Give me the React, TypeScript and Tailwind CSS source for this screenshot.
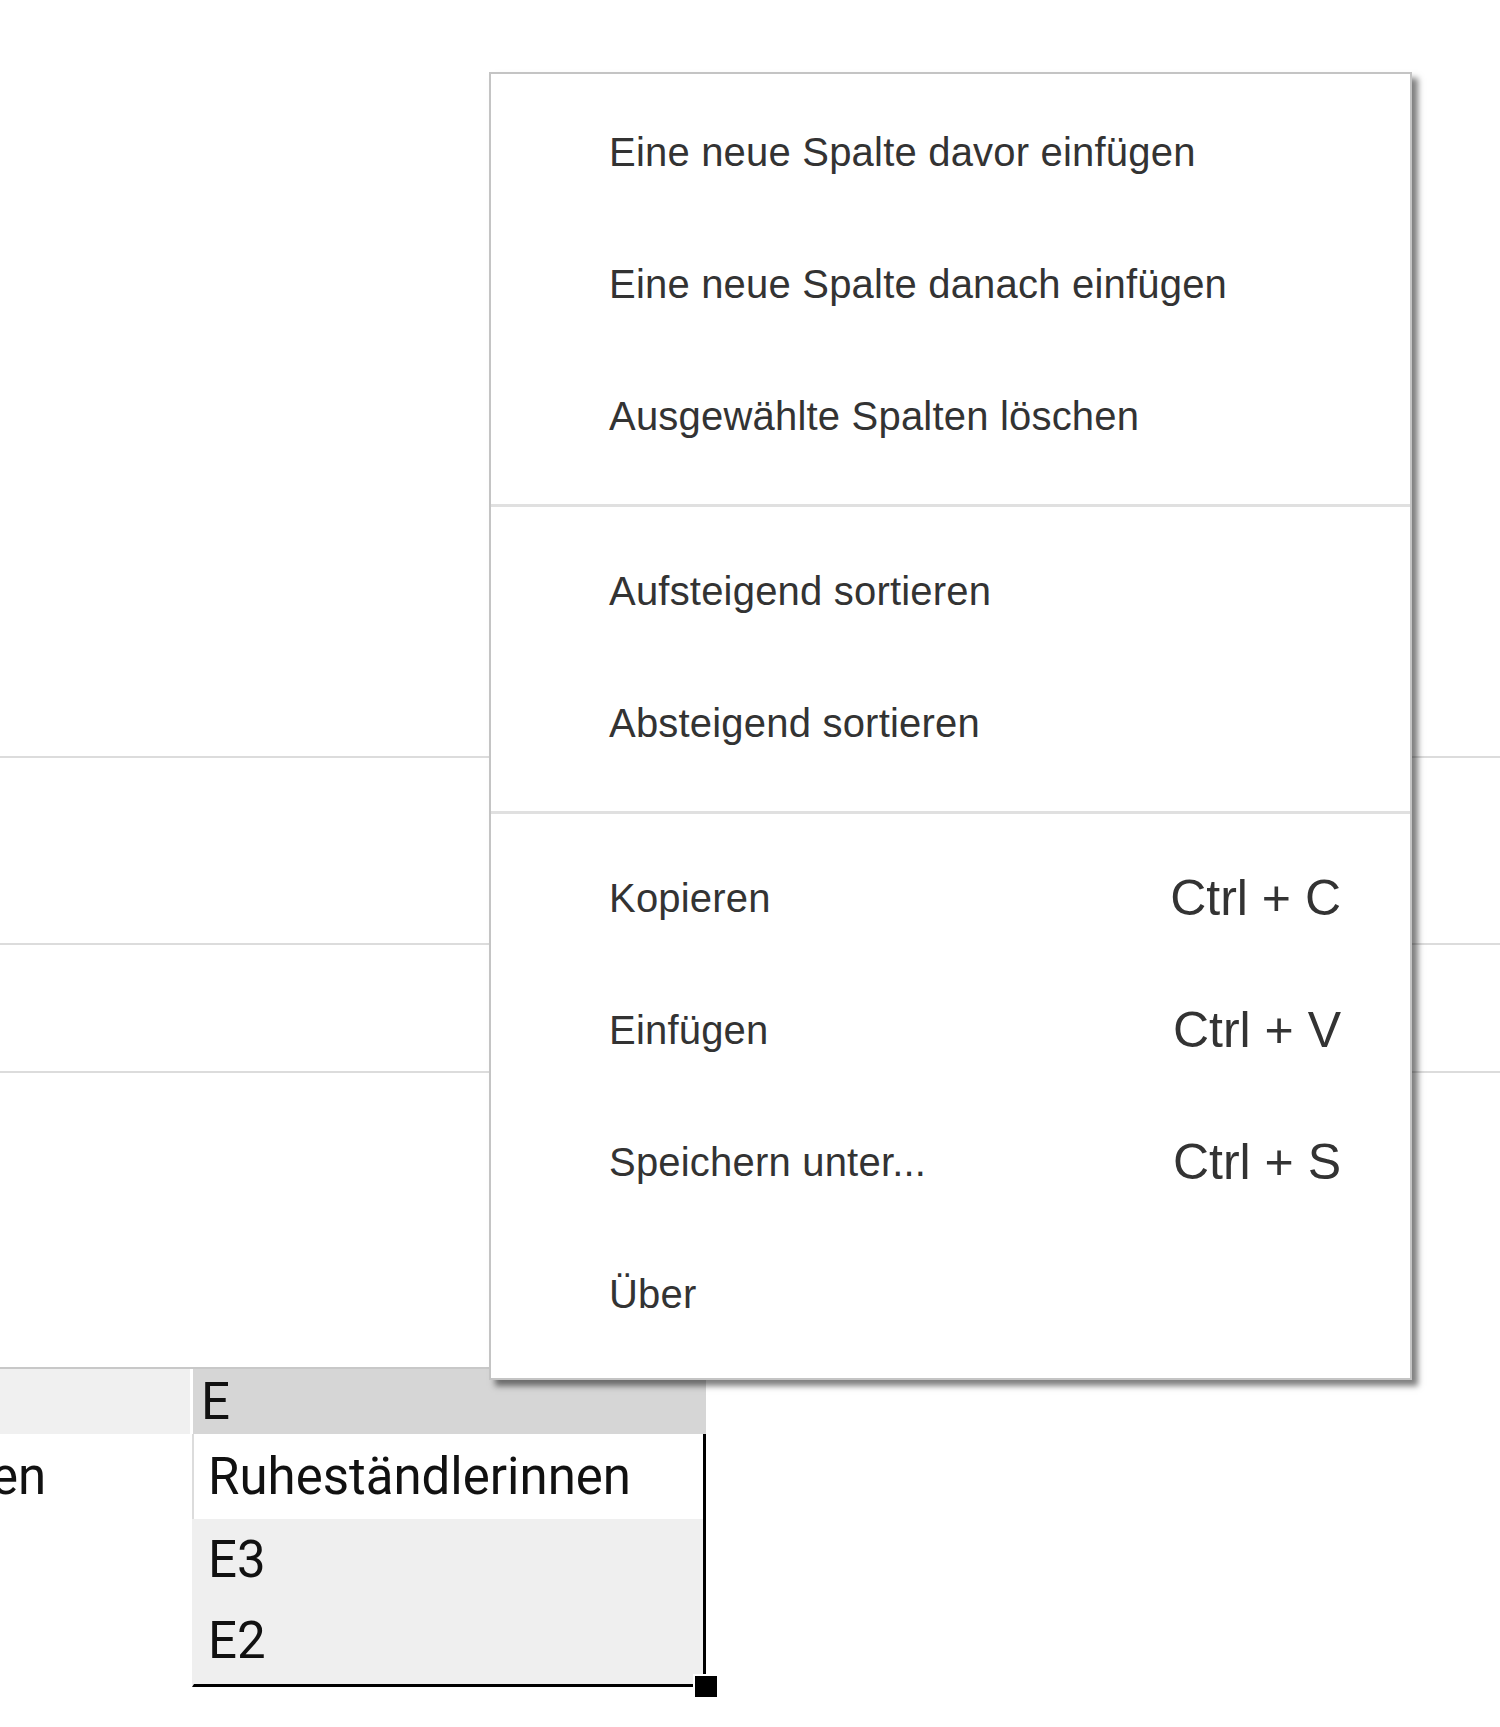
type MenuItem = {
  label: string;
  shortcut?: string;
};

const menuGroups: MenuItem[][] = [
  [
    { label: "Eine neue Spalte davor einfügen" },
    { label: "Eine neue Spalte danach einfügen" },
    { label: "Ausgewählte Spalten löschen" },
  ],
  [{ label: "Aufsteigend sortieren" }, { label: "Absteigend sortieren" }],
  [
    { label: "Kopieren", shortcut: "Ctrl + C" },
    { label: "Einfügen", shortcut: "Ctrl + V" },
    { label: "Speichern unter...", shortcut: "Ctrl + S" },
    { label: "Über" },
  ],
];

const ContextMenu = () => {
  return (
    <div className="absolute left-[489px] top-[72px] w-[923px] bg-white border-2 border-[#c4c4c4] shadow-[6px_6px_6px_rgba(0,0,0,0.5)] pt-[12px] pb-[18px] font-['Liberation_Sans',Arial,sans-serif] text-[#333]">
      {menuGroups.map((group, gi) => (
        <div key={gi}>
          {gi > 0 && <div className="mt-[22px] mb-[18px] h-[3px] bg-[#e0e0e0]" />}
          {group.map((item) => (
            <div
              key={item.label}
              className="flex h-[132px] items-center justify-between pl-[118px] pr-[69px]"
            >
              <span className="text-[40px] tracking-[0.2px]">{item.label}</span>
              {item.shortcut && <span className="text-[50px]">{item.shortcut}</span>}
            </div>
          ))}
        </div>
      ))}
    </div>
  );
};

export default function App() {
  return (
    <div className="relative min-h-[1727px] w-full overflow-hidden bg-white">
      {/* Rows behind the menu */}
      <div className="h-[758px] border-b-2 border-[#dcdcdc]" />
      <div className="h-[187px] border-b-2 border-[#dcdcdc]" />
      <div className="h-[128px] border-b-2 border-[#dcdcdc]" />
      <div className="h-[294px]" />

      {/* Sheet */}
      <div className="relative w-[706px] font-['Roboto',sans-serif] text-[51px] text-[#111]">
        <div className="flex border-t-2 border-[#c8c8c8]">
          <div className="h-[65px] w-[190px] bg-[#f0f0f0]" />
          <div className="w-[3px]" />
          <div className="flex h-[65px] w-[513px] items-center bg-[#d6d6d6] pl-[8px] leading-none">
            E
          </div>
        </div>
        <div className="flex h-[85px]">
          <div className="flex w-[192px] items-center overflow-hidden leading-none">
            <span className="-ml-[9px]">en</span>
          </div>
          <div className="flex w-[514px] items-center border-l-2 border-r-[3px] border-l-[#dcdcdc] border-r-black bg-white pl-[14px] leading-none">
            Ruheständlerinnen
          </div>
        </div>
        <div className="flex h-[80px]">
          <div className="w-[192px]" />
          <div className="flex w-[514px] items-center border-l-2 border-r-[3px] border-l-transparent border-r-black bg-[#efefef] pl-[14px] leading-none">
            E3
          </div>
        </div>
        <div className="flex h-[88px]">
          <div className="w-[192px]" />
          <div className="flex w-[514px] items-center border-b-[3px] border-l-2 border-r-[3px] border-b-black border-l-transparent border-r-black bg-[#efefef] pb-[3px] pl-[14px] leading-none">
            E2
          </div>
        </div>
        <div className="absolute left-[693px] top-[307px] h-[25px] w-[26px] border-2 border-white bg-black" />
      </div>

      <ContextMenu />
    </div>
  );
}
